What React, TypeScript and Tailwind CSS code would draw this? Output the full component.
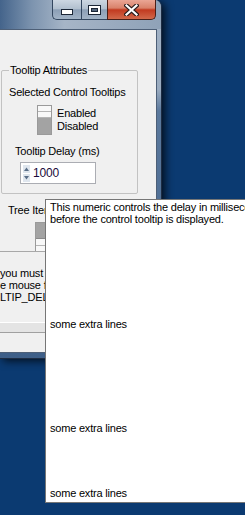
import React from 'react'

const FONT = "font-['Liberation_Sans',Arial,sans-serif] text-[11px] leading-[13px] tracking-[-0.2px] text-black"

function TitleButtons() {
  return (
    <div className="flex h-[20px] pr-[5px] justify-end">
      <div className="w-[29px] h-[20px] border border-t-0 border-r-0 border-[#33465f] rounded-bl-[5px] bg-[linear-gradient(180deg,#cdd7e2_0%,#b2c0cf_45%,#8c9fb6_52%,#a2b3c6_100%)] flex items-end justify-center pb-[4px]">
        <svg width="12" height="6" viewBox="0 0 12 6">
          <rect x="0.5" y="0.5" width="11" height="5" fill="#fff" stroke="#1b2636" />
        </svg>
      </div>
      <div className="w-[26px] h-[20px] border border-t-0 border-r-0 border-[#33465f] bg-[linear-gradient(180deg,#cdd7e2_0%,#b2c0cf_45%,#8c9fb6_52%,#a2b3c6_100%)] flex items-center justify-center">
        <svg width="13" height="10" viewBox="0 0 13 10">
          <rect x="0.5" y="0.5" width="12" height="9" fill="#fff" stroke="#1b2636" />
          <rect x="3.5" y="3.5" width="6" height="3" fill="#53657c" stroke="#1b2636" />
        </svg>
      </div>
      <div className="w-[49px] h-[20px] border border-t-0 border-[#4a1f18] rounded-br-[5px] bg-[linear-gradient(180deg,#eaa695_0%,#d9826b_42%,#c23a20_52%,#d2694b_100%)] flex items-center justify-center">
        <svg width="15" height="12" viewBox="0 0 15 12">
          <path d="M2.5 1.5 L12.5 10.5 M12.5 1.5 L2.5 10.5" stroke="#2a1c1c" strokeWidth="4.4" strokeLinecap="square" />
          <path d="M2.5 1.5 L12.5 10.5 M12.5 1.5 L2.5 10.5" stroke="#fff" strokeWidth="2.2" strokeLinecap="square" />
        </svg>
      </div>
    </div>
  )
}

function Toggle({ on }: { on: boolean }) {
  return (
    <div className="w-[15px] h-[30px] border border-[#9a9a9a] flex flex-col">
      {on ? (
        <>
          <div className="h-[6px] bg-[#f8f8f8] border-b border-[#b5b5b5]" />
          <div className="h-[6px] bg-[#f8f8f8] border-b border-[#b5b5b5]" />
          <div className="flex-1 bg-[#a3a3a3]" />
        </>
      ) : (
        <>
          <div className="flex-1 bg-[#a3a3a3] border-b border-[#8a8a8a]" />
          <div className="h-[7px] bg-[#f8f8f8] border-b border-[#b5b5b5]" />
          <div className="h-[5px] bg-[#f8f8f8]" />
        </>
      )}
    </div>
  )
}

function Spinner() {
  return (
    <div className="w-[76px] h-[22px] border border-[#abadb3] bg-white flex items-center">
      <div className="w-[9px] h-full flex flex-col items-center justify-center gap-[1px] pl-[1px]">
        <svg width="7" height="8" viewBox="0 0 7 8">
          <rect x="0" y="0" width="7" height="8" fill="#dfe6ee" />
          <path d="M1 6 L3.5 2.5 L6 6 Z" fill="#5a6f89" />
        </svg>
        <svg width="7" height="8" viewBox="0 0 7 8">
          <rect x="0" y="0" width="7" height="8" fill="#dfe6ee" />
          <path d="M1 2 L3.5 5.5 L6 2 Z" fill="#5a6f89" />
        </svg>
      </div>
      <span className="ml-[3px] text-[12px] text-[#1a0a3a]">1000</span>
    </div>
  )
}

function Tooltip() {
  return (
    <div className="absolute left-[45px] top-[199px] w-[230px] h-[304px] bg-white border border-[#767676] pl-[4px] pt-[1px] flex flex-col whitespace-nowrap">
      <span className="leading-[12px]">This numeric controls the delay in milliseconds</span>
      <span className="leading-[12px]">before the control tooltip is displayed.</span>
      <span className="mt-[93px] leading-[12px]">some extra lines</span>
      <span className="mt-[92px] leading-[12px]">some extra lines</span>
      <span className="mt-[53px] leading-[12px]">some extra lines</span>
    </div>
  )
}

export default function App() {
  return (
    <div className={`relative w-[245px] h-[515px] overflow-hidden bg-[#0b3a71] ${FONT}`}>
      <div className="absolute left-0 top-0 w-[162px] h-[359px] flex flex-col border-r border-b border-[#1d2c42] rounded-tr-[7px] bg-[linear-gradient(180deg,#a4b4c7_0%,#9aabbf_25%,#5b799d_31%,#3e5f88_100%)] shadow-[3px_2px_8px_rgba(0,0,0,0.75)]">
        <div className="h-[29px] shrink-0 rounded-tr-[7px] bg-[linear-gradient(90deg,#44648b_0%,#7d94af_20%,#a6b5c7_40%,#9aabbf_70%,#8fa2b8_100%)]">
          <TitleButtons />
        </div>
        <div className="flex-1 mr-[4px] mb-[5px] bg-[#f0f0f0] border-t border-r border-b border-[#4d5f77] flex flex-col whitespace-nowrap">
          <div className="relative mt-[40px] ml-[1px] w-[137px] h-[124px] shrink-0 border border-[#c2c2c2] rounded-[2px]">
            <span className="absolute -top-[7px] left-[7px] px-[1px] bg-[#f0f0f0]">Tooltip Attributes</span>
            <div className="pt-[15px] pl-[7px]">Selected Control Tooltips</div>
            <div className="mt-[6px] ml-[35px] flex gap-[5px]">
              <Toggle on />
              <div className="mt-[2px] flex flex-col">
                <span>Enabled</span>
                <span>Disabled</span>
              </div>
            </div>
            <div className="mt-[10px] ml-[13px]">Tooltip Delay (ms)</div>
            <div className="mt-[4px] ml-[18px]">
              <Spinner />
            </div>
          </div>
          <div className="mt-[10px] ml-[8px]">Tree Item Tooltips</div>
          <div className="mt-[5px] ml-[35px] flex gap-[5px]">
            <div className="w-[16px]">
              <div className="h-[29px]">
                <Toggle on={false} />
              </div>
            </div>
            <div className="mt-[2px] flex flex-col">
              <span>Enabled</span>
              <span>Disabled</span>
            </div>
          </div>
          <div className="h-[71px] border-t border-[#a8a8a8] pt-[15px] flex flex-col leading-[12px]">
            <span>you must hover</span>
            <span>e mouse for the</span>
            <span>LTIP_DELAY</span>
          </div>
          <div className="h-[10px] border-t border-white bg-[#e4e4e4]" />
          <div className="flex-1 border-t border-[#a0a0a0]" />
        </div>
      </div>
      <Tooltip />
    </div>
  )
}
